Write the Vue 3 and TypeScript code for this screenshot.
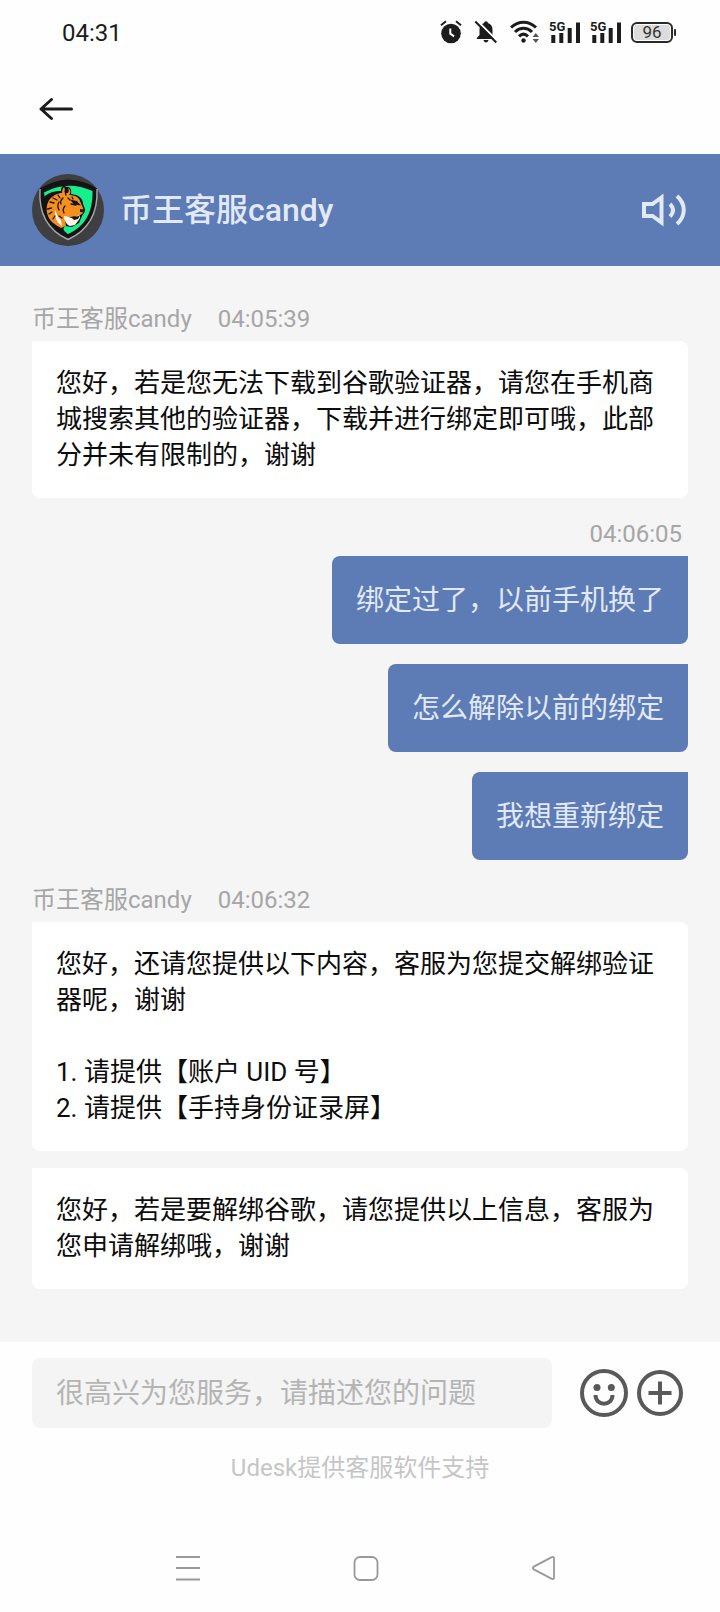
<script setup lang="ts">
import { ref } from 'vue'

interface Group {
  id: number
  from: 'agent' | 'user'
  time: string
  bubbles: string[]
}

const agentName = '币王客服candy'
const draft = ref('')

const groups: Group[] = [
  {
    id: 1,
    from: 'agent',
    time: '04:05:39',
    bubbles: [
      '您好，若是您无法下载到谷歌验证器，请您在手机商城搜索其他的验证器，下载并进行绑定即可哦，此部分并未有限制的，谢谢',
    ],
  },
  {
    id: 2,
    from: 'user',
    time: '04:06:05',
    bubbles: ['绑定过了，以前手机换了', '怎么解除以前的绑定', '我想重新绑定'],
  },
  {
    id: 3,
    from: 'agent',
    time: '04:06:32',
    bubbles: [
      '您好，还请您提供以下内容，客服为您提交解绑验证器呢，谢谢\n\n1. 请提供【账户 UID 号】\n2. 请提供【手持身份证录屏】',
      '您好，若是要解绑谷歌，请您提供以上信息，客服为您申请解绑哦，谢谢',
    ],
  },
]
</script>

<template>
  <div class="screen">
    <div class="status">
      <time class="clock">04:31</time>
      <div class="status-icons">
        <svg class="alarm" width="22" height="24" viewBox="0 0 22 24" aria-hidden="true">
          <circle cx="11" cy="13.5" r="9.8" fill="#1c1c1c" />
          <path d="M1 5.2 6 1.2M21 5.2 16 1.2" stroke="#1c1c1c" stroke-width="2" fill="none" />
          <path d="M10.3 8.5v5.2l3.8 2.6" stroke="#fff" stroke-width="2" fill="none" />
        </svg>
        <svg class="bell" width="24" height="24" viewBox="0 0 24 24" aria-hidden="true">
          <path
            d="M12 1.2c1.2 0 1.9.8 1.9 1.9 3 .9 4.6 3.3 4.6 6.4V15l2.5 3v1H2.8v-1l2.7-3V9.500c0-3.100 1.600-5.500 4.600-6.400 0-1.100.7-1.900 1.900-1.900zM9.500 20h5c-.3 1.600-1.200 2.400-2.500 2.400S9.800 21.600 9.500 20z"
            fill="#1c1c1c"
          />
          <path d="M2.8.3 24 21.5" stroke="#fff" stroke-width="2" />
          <path d="M1.3 1.5 22.3 22.5" stroke="#1c1c1c" stroke-width="2" />
        </svg>
        <svg class="wifi" width="30" height="24" viewBox="0 0 30 24" aria-hidden="true">
          <g fill="none" stroke="#1c1c1c" stroke-width="3">
            <path d="M1 7.5C8.500.4 18.500.4 26 7.500" />
            <path d="M5 12c5-4.9 12-4.9 17 0" />
            <path d="M9 16.3c2.8-2.7 6.2-2.7 9 0" />
          </g>
          <circle cx="13.5" cy="20.5" r="2.2" fill="#1c1c1c" />
          <path d="M22.6 17 25.8 13 29 17zM22.6 19h6.4l-3.2 4z" fill="#555" />
        </svg>
        <svg v-for="n in 2" :key="n" class="signal" width="32" height="36" viewBox="0 -6 32 36" role="img" aria-label="5G">
          <text x="0" y="11" font-family="Roboto, sans-serif" font-size="13" font-weight="700" fill="#1c1c1c">5G</text>
          <path d="M2.3 15h4v8h-4zM10.300 13h4v10h-4zM18.700 8h4v15h-4zM27 2.500h4V23h-4z" fill="#1c1c1c" />
        </svg>
        <div class="battery"><span>96</span></div>
      </div>
    </div>

    <nav class="topnav">
      <button class="plain" type="button" aria-label="返回">
        <svg width="36" height="24" viewBox="0 0 36 24" aria-hidden="true">
          <path d="M13.5 2.5 3 12l10.5 9.5M3 12h30.5" fill="none" stroke="#1c1c1c" stroke-width="3" stroke-linecap="round" stroke-linejoin="round" />
        </svg>
      </button>
    </nav>

    <header class="header">
      <svg class="avatar" width="72" height="72" viewBox="0 0 72 72" aria-hidden="true">
        <circle cx="36" cy="36" r="36" fill="#3f3e40" />
        <path d="M8 14.5Q22 6 36 5.5 52 6 65 14.5C66 38 57 56 36 65.5 15 56 6 38 8 14.5z" fill="#141416" />
        <path d="M65 15C66 38 57 56 36 65.5 15 56 6.5 38 8 15" fill="none" stroke="#a9a9ab" stroke-width="1.4" />
        <path d="M12 18.5Q35 6 60.5 17C61 37 54 52 36 60c-5-3-6-7-5-12L14 32z" fill="#17ef8c" />
        <path d="M11 24C16 18 23 17 29 17c0-3 1-5 3-6l2 2c4-1 6 3 5 7l5 1c5 2 7 5 7 9 2 5 3 7 1 9l-2 3-3 7-7 4-7-1-3 5C19 51 11 38 11 24z" fill="#121214" />
        <path d="M16 42c-3-8-1-17 7-21 3-1.5 5-2 7-2 0-3 1-5 2-6 1 2 1 4 1 6h3c1-1.5 1-3 0-5 3 2 3 5 1 7 5 0 10 2 11 6l3 7c1 3 .5 5-1 6l-4 2-8 1-5 3 1 6-5 2C22 50 18 47 16 42z" fill="#f68f1e" />
        <path d="M32 42c3 0 6 2 9 2l6-3c2 1 1 4-1 6l-3 4-5 1c-3-1-6-5-6-10z" fill="#fff5e6" />
        <path d="M23 36c2 3 2 7 6 10l1 6c-4-2-8-8-7-16z" fill="#fff5e6" />
        <path d="M40 26l6 2 2 3-5-1z" fill="#fff" />
        <g fill="none" stroke="#161616" stroke-width="1.3" stroke-linecap="round">
          <path d="M18 28l4 1M21 24l4 2M26 21l2 3M15.5 35l4-1M17 40l3-2M21 45l2-3M27 28c-2 3-1 6 0 8M31 24c-2 2-3 4-2 6M33 32c-2 2-2 5-1 7M36 24l2 2M40 23l1 2M33 17l1 4M39 30l5 1M27 42l3 2" />
        </g>
        <path d="M38 25.5l7 1.5 4 4.5-7-1zM48 35l4 .5-.5 3-3.5-.5zM39 43l6-.5 3-1-2 3.5-4 1z" fill="#161616" />
      </svg>
      <h1 class="title">{{ agentName }}</h1>
      <button class="plain" type="button" aria-label="声音">
        <svg width="46" height="36" viewBox="0 0 46 36" aria-hidden="true">
          <g fill="none" stroke="#e1e9f8" stroke-width="4">
            <path d="M2 12h8.5L19.5 5.5v25L10.5 24H2z" />
            <path d="M28 12c4 4 4 8.5 0 12.5" />
            <path d="M35 4c9 8 9 20 0 28" />
          </g>
        </svg>
      </button>
    </header>

    <main class="chat">
      <section v-for="g in groups" :key="g.id" class="group" :class="g.from">
        <div class="meta">
          <span v-if="g.from === 'agent'">{{ agentName }}</span>
          <time>{{ g.time }}</time>
        </div>
        <div class="bubbles">
          <p v-for="(text, i) in g.bubbles" :key="i" class="bubble">{{ text }}</p>
        </div>
      </section>
    </main>

    <footer class="footer">
      <form class="composer" @submit.prevent>
        <input v-model="draft" class="field" type="text" aria-label="消息" placeholder="很高兴为您服务，请描述您的问题" />
        <button class="plain" type="button" aria-label="表情">
          <svg width="48" height="48" viewBox="0 0 48 48" aria-hidden="true">
            <circle cx="24" cy="24" r="22" fill="none" stroke="#595959" stroke-width="4" />
            <circle cx="17" cy="18.5" r="3.5" fill="#595959" />
            <circle cx="31.3" cy="18.5" r="3.5" fill="#595959" />
            <path d="M15.5 26c0 11.5 17 11.5 17 0" fill="none" stroke="#595959" stroke-width="4" />
          </svg>
        </button>
        <button class="plain" type="button" aria-label="更多">
          <svg width="48" height="48" viewBox="0 0 48 48" aria-hidden="true">
            <circle cx="24" cy="24" r="21" fill="none" stroke="#595959" stroke-width="4" />
            <path d="M24 12.5v23M12.5 24h23" stroke="#595959" stroke-width="4" />
          </svg>
        </button>
      </form>
      <p class="support">Udesk提供客服软件支持</p>
    </footer>

    <nav class="sysnav">
      <button class="plain" type="button" aria-label="最近任务">
        <svg width="26" height="26" viewBox="0 0 26 26" aria-hidden="true">
          <path d="M1 2h24M1 13h24M1 24.500h24" stroke="#999" stroke-width="2" />
        </svg>
      </button>
      <button class="plain" type="button" aria-label="主屏幕">
        <svg width="26" height="26" viewBox="0 0 26 26" aria-hidden="true">
          <rect x="1.5" y="2" width="23" height="23" rx="5.5" fill="none" stroke="#999" stroke-width="1.8" />
        </svg>
      </button>
      <button class="plain" type="button" aria-label="后退">
        <svg width="26" height="26" viewBox="0 0 26 26" aria-hidden="true">
          <path d="M23 3.5v19c0 1.4-1 2-2.2 1.4L2.8 14.4c-1.2-.7-1.2-2.1 0-2.8L20.8 2.1C22 1.5 23 2.1 23 3.5z" fill="none" stroke="#999" stroke-width="1.8" />
        </svg>
      </button>
    </nav>
  </div>
</template>

<style>
body {
  margin: 0;
  background: #fff;
}
</style>

<style scoped>
.screen {
  display: flex;
  flex-direction: column;
  min-height: 100vh;
  background: #fefefe;
  font-family: Roboto, "Noto Sans CJK SC", sans-serif;
  color: #0c0c0c;
}
.screen svg {
  display: block;
  flex: none;
}
.plain {
  margin: 0;
  padding: 0;
  border: 0;
  background: none;
}
.status {
  display: flex;
  align-items: center;
  justify-content: space-between;
  height: 64px;
  padding: 0 45px 0 62px;
}
.clock {
  padding-top: 2px;
  font-size: 24px;
  line-height: 28px;
  color: #1c1c1c;
}
.status-icons {
  display: flex;
  align-items: center;
}
.bell {
  margin-left: 12px;
}
.wifi {
  margin-left: 12px;
}
.signal {
  margin-left: 9px;
}
.battery {
  position: relative;
  display: flex;
  align-items: center;
  justify-content: center;
  box-sizing: border-box;
  width: 42px;
  height: 21px;
  margin: 0 2px 0 9px;
  border: 2px solid #2a2a2a;
  border-radius: 6px;
  box-shadow: inset 0 0 0 1px #fff;
  background: #dcdcdc;
  font-size: 17px;
  line-height: 17px;
  color: #333;
}
.battery::after {
  content: "";
  position: absolute;
  right: -5px;
  top: 5px;
  width: 2px;
  height: 7px;
  border-radius: 1px;
  background: #2a2a2a;
}
.topnav {
  display: flex;
  align-items: center;
  height: 90px;
  padding: 0 38px;
}
.header {
  display: flex;
  align-items: center;
  height: 112px;
  padding: 0 32px;
  background: #5d7bb4;
}
.title {
  flex: 1;
  margin: 0 0 0 16px;
  font-size: 32px;
  line-height: 40px;
  font-weight: 500;
  color: #e1e9f8;
}
.chat {
  flex: 1;
  padding: 36px 32px 48px;
  background: #f5f5f5;
}
.meta {
  display: flex;
  gap: 26px;
  margin-bottom: 4px;
  font-size: 24px;
  line-height: 35px;
  color: #a6a6a6;
}
.bubbles {
  display: flex;
  flex-direction: column;
  gap: 17px;
}
.bubble {
  margin: 0;
  padding: 24px 24px 25px;
  border-radius: 0 8px 8px 8px;
  background: #fff;
  font-size: 26px;
  line-height: 36px;
  white-space: pre-wrap;
}
.user {
  margin: 19px 0 23px;
}
.user .meta {
  justify-content: flex-end;
  padding-right: 6px;
}
.user .bubbles {
  align-items: flex-end;
  gap: 20px;
}
.user .bubble {
  padding: 25px 24px 23px;
  border-radius: 8px 0 8px 8px;
  background: #5d7bb4;
  color: #e1e9f8;
  font-size: 28px;
  line-height: 40px;
}
.footer {
  padding: 16px 32px 0;
}
.composer {
  display: flex;
  align-items: center;
  gap: 8px;
  padding-right: 4px;
}
.field {
  flex: 1;
  min-width: 0;
  box-sizing: border-box;
  height: 70px;
  margin-right: 20px;
  padding: 0 24px;
  border: 0;
  border-radius: 8px;
  outline: none;
  background: #f4f4f4;
  font-family: inherit;
  font-size: 28px;
  color: #0c0c0c;
}
.field::placeholder {
  color: #b4b4b4;
  opacity: 1;
}
.support {
  margin: 23px 0 0;
  font-size: 24px;
  line-height: 34px;
  text-align: center;
  color: #c6c6c6;
}
.sysnav {
  display: grid;
  grid-template-columns: repeat(3, 1fr);
  justify-items: center;
  align-items: center;
  height: 88px;
  margin-top: 39px;
  padding: 0 87px 0 99px;
}
</style>
